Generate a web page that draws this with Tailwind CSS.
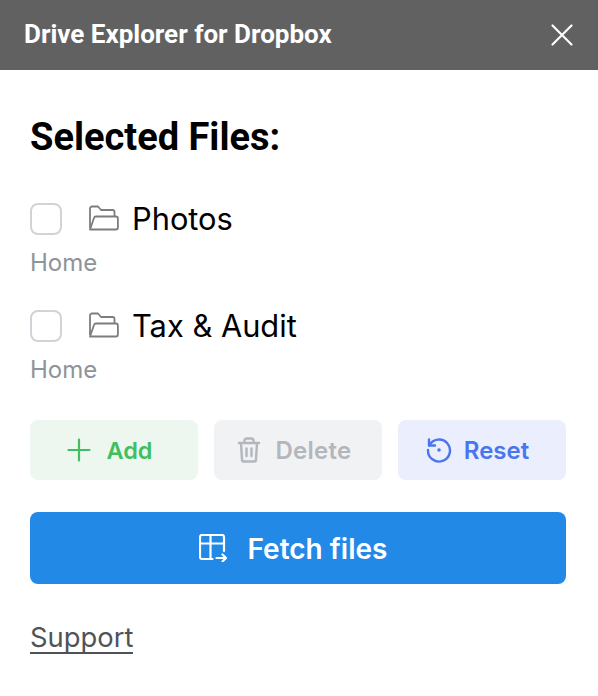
<!DOCTYPE html>
<html lang="en">
<head>
    <meta charset="UTF-8">
    <title>Drive Explorer for Dropbox</title>
    <script src="https://cdn.jsdelivr.net/npm/@tailwindcss/browser@4"></script>
</head>
<body class="bg-white font-['Inter',sans-serif]">
    <div class="flex h-[70px] items-center justify-between bg-[#616161] px-6">
        <h1 class="pb-[2px] font-['Roboto',sans-serif] text-[26px] font-bold text-white">Drive Explorer for Dropbox</h1>
        <svg class="h-6 w-6" viewBox="0 0 24 24" fill="none" stroke="white" stroke-width="2.2" stroke-linecap="round"><path d="M2.500 2.500 21.500 21.500M21.500 2.500 2.500 21.500"/></svg>
    </div>
    <div class="pl-[30px] pr-8">
        <h2 class="mt-[47px] font-['Roboto',sans-serif] text-[38px] leading-10 font-bold text-black">Selected Files:</h2>

        <div class="mt-[46px] flex h-8 items-center">
            <span class="h-8 w-8 rounded-lg border-2 border-[#d0d4d8] bg-white"></span>
            <svg class="ml-[25px] h-8 w-8" viewBox="0 0 32 32" fill="none" stroke="#7d7d7d" stroke-width="1.8" stroke-linejoin="round"><path d="M3 25V5.500a2 2 0 0 1 2-2h6l3 3.500h11.500a2 2 0 0 1 2 2V13"/><path d="M3 26.500 7 15a2 2 0 0 1 1.900-1.500h20a2 2 0 0 1 2 2v9a2 2 0 0 1-2 2z"/></svg>
            <span class="ml-[13px] text-[30.8px] text-black">Photos</span>
        </div>
        <p class="mt-[14px] text-[24px] leading-7 text-[#8e9499]">Home</p>

        <div class="mt-[33px] flex h-8 items-center">
            <span class="h-8 w-8 rounded-lg border-2 border-[#d0d4d8] bg-white"></span>
            <svg class="ml-[25px] h-8 w-8" viewBox="0 0 32 32" fill="none" stroke="#7d7d7d" stroke-width="1.8" stroke-linejoin="round"><path d="M3 25V5.500a2 2 0 0 1 2-2h6l3 3.500h11.500a2 2 0 0 1 2 2V13"/><path d="M3 26.500 7 15a2 2 0 0 1 1.900-1.500h20a2 2 0 0 1 2 2v9a2 2 0 0 1-2 2z"/></svg>
            <span class="ml-[13px] text-[30.8px] text-black">Tax &amp; Audit</span>
        </div>
        <p class="mt-[14px] text-[24px] leading-7 text-[#8e9499]">Home</p>

        <div class="mt-[36px] grid grid-cols-3 gap-4">
            <button class="flex h-[60px] items-center justify-center gap-[15px] rounded-lg bg-[#edf7f0] pr-[8px] text-[23.5px] font-semibold text-[#41bf5e]">
                <svg class="h-6 w-6" viewBox="0 0 24 24" fill="none" stroke="currentColor" stroke-width="2.2" stroke-linecap="round"><path d="M12 1.500v21M1.500 12h21"/></svg>
                <span class="pt-[2px]">Add</span>
            </button>
            <button class="flex h-[60px] items-center justify-center gap-[14px] rounded-lg bg-[#f1f2f4] pr-[7px] text-[24px] font-semibold tracking-[0.3px] text-[#b3b7bd]">
                <svg class="h-[26px] w-6" viewBox="0 0 24 26" fill="none" stroke="currentColor" stroke-width="2.400" stroke-linecap="round" stroke-linejoin="round"><path d="M2 6h20M7.500 6V3.500a2 2 0 0 1 2-2h5a2 2 0 0 1 2 2V6M4 6l1 16.500a2 2 0 0 0 2 2h10a2 2 0 0 0 2-2L20 6M9.500 11.500v7.500M14.500 11.500v7.500"/></svg>
                <span class="pt-[2px]">Delete</span>
            </button>
            <button class="flex h-[60px] items-center justify-center gap-[11px] rounded-lg bg-[#ebeffd] pr-[10px] text-[24px] font-semibold text-[#4a75f0]">
                <svg class="h-7 w-7" viewBox="0 0 28 28" fill="none" stroke="currentColor" stroke-width="2.400" stroke-linecap="round" stroke-linejoin="round"><path d="M4 3.500v6h6"/><path d="M4.200 9.500A11 11 0 1 1 3 14"/><circle cx="14" cy="14" r="1.800" fill="currentColor" stroke="none"/></svg>
                <span class="pt-[2px]">Reset</span>
            </button>
        </div>

        <button class="mt-8 flex h-[72px] w-full items-center justify-center gap-[21px] rounded-lg bg-[#2389e6] pr-[10px] text-[28px] font-semibold text-white">
            <svg class="h-7 w-7" viewBox="0 0 28 28" fill="none" stroke="white" stroke-width="2.200" stroke-linecap="round" stroke-linejoin="round"><path d="M13.500 25H3a2 2 0 0 1-2-2V3a2 2 0 0 1 2-2h20a2 2 0 0 1 2 2v14M1 9.500h24M11.500 1v24"/><path d="M17.500 24h9.500M23.500 20.500 27 24l-3.500 3.500"/></svg>
            <span class="pt-[2px]">Fetch files</span>
        </button>

        <a href="#" class="mt-[38px] inline-block border-b-2 border-[#4f5358] text-[27.4px] leading-[30px] text-[#4f5358]">Support</a>
    </div>
</body>
</html>
